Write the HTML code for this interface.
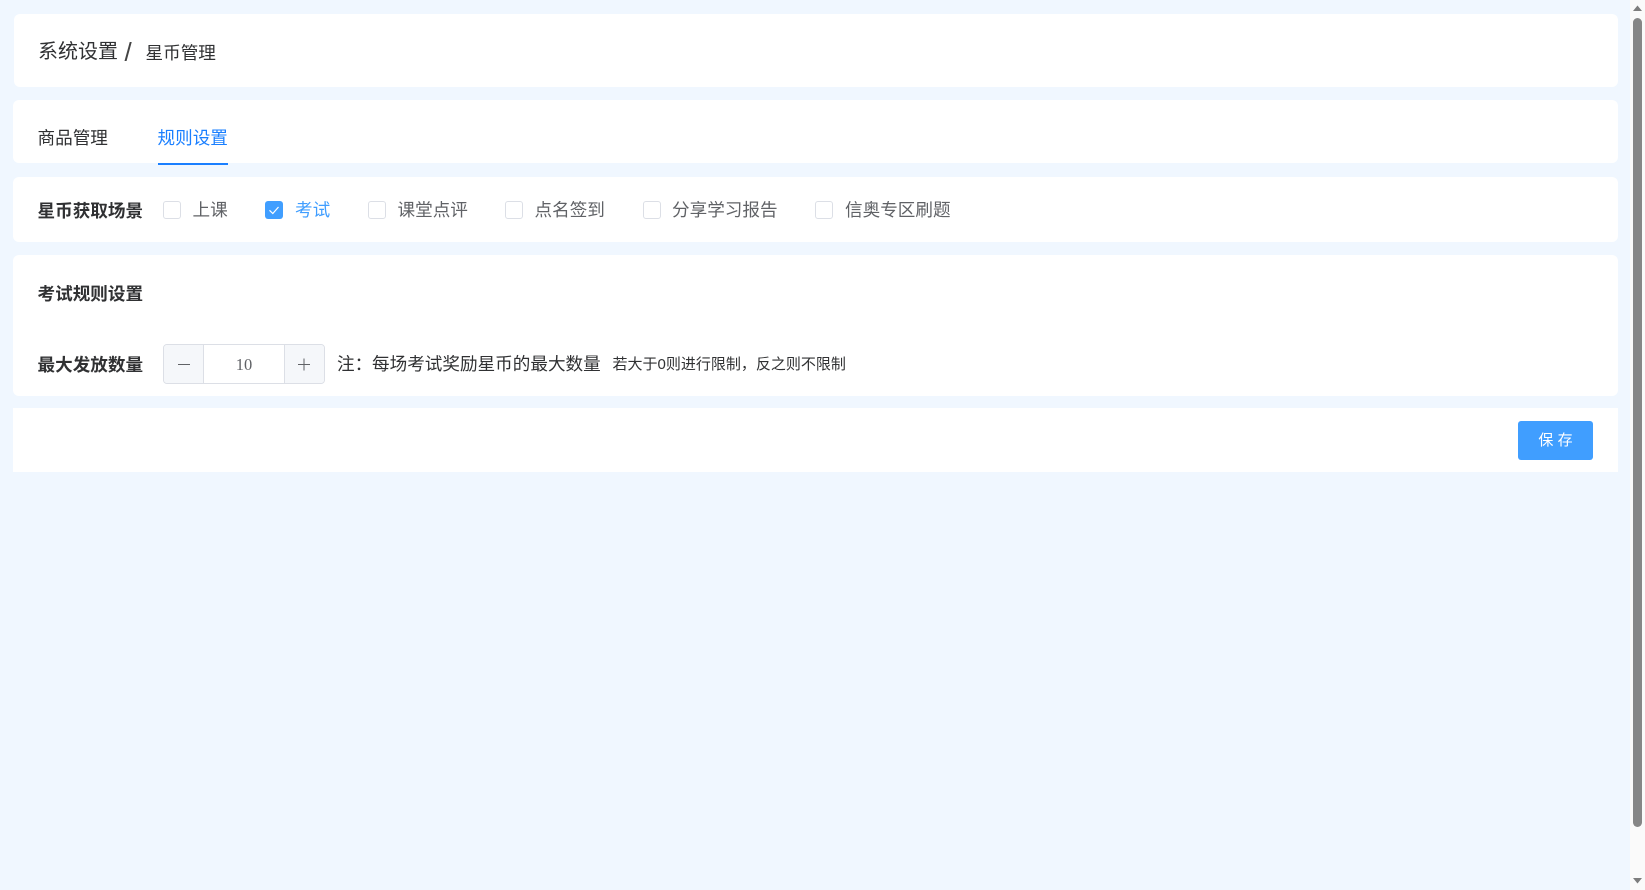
<!DOCTYPE html>
<html lang="zh-CN">
<head>
<meta charset="utf-8">
<title>星币管理</title>
<style>
html,body{margin:0;padding:0;width:1645px;height:890px;overflow:hidden;background:#f0f7ff;}
body{position:relative;font-family:"Liberation Sans","WenQuanYi Zen Hei","Noto Sans CJK SC",sans-serif;color:#303133;}
.card{position:absolute;background:#fff;border-radius:6px;left:13px;width:1605px;}
.t{position:absolute;white-space:nowrap;line-height:24px;font-size:17.6px;}
.b{font-weight:bold;}
.g{color:#606266;}
.cb{position:absolute;top:201px;width:16px;height:16px;border:1px solid #dcdfe6;border-radius:3px;background:#fff;}
</style>
</head>
<body>
<div class="card" style="top:14px;height:73px;left:14px;width:1604px;"></div>
<div class="t" style="left:38px;top:40px;font-size:20px;">系统设置</div>
<div class="t" style="left:124.500px;top:40px;font-size:26px;font-weight:300;color:#444;">/</div>
<div class="t" style="left:145.500px;top:41px;">星币管理</div>

<div class="card" style="top:100px;height:63px;"></div>
<div class="t" style="left:37.500px;top:126px;">商品管理</div>
<div class="t" style="left:157.500px;top:126px;color:#1a7fff;">规则设置</div>
<div style="position:absolute;left:158px;top:163px;width:70px;height:2px;background:#1a7fff;"></div>

<div class="card" style="top:177px;height:65px;"></div>
<div class="t b" style="left:37.500px;top:199px;">星币获取场景</div>
<div class="cb" style="left:163px;"></div>
<div class="t g" style="left:192.500px;top:198px;">上课</div>
<div class="cb" style="left:265px;width:18px;height:18px;border:0;background:#409eff;">
<svg width="18" height="18" viewBox="0 0 18 18" style="display:block"><path d="M4.500 9.300 L7.800 12.500 L13.500 6" fill="none" stroke="#fff" stroke-width="1.200"/></svg>
</div>
<div class="t" style="left:295px;top:198px;color:#409eff;">考试</div>
<div class="cb" style="left:368px;"></div>
<div class="t g" style="left:397.500px;top:198px;">课堂点评</div>
<div class="cb" style="left:505px;"></div>
<div class="t g" style="left:534.500px;top:198px;">点名签到</div>
<div class="cb" style="left:643px;"></div>
<div class="t g" style="left:672px;top:198px;">分享学习报告</div>
<div class="cb" style="left:815px;"></div>
<div class="t g" style="left:845px;top:198px;">信奥专区刷题</div>

<div class="card" style="top:255px;height:141px;"></div>
<div class="t b" style="left:37.500px;top:282px;">考试规则设置</div>
<div class="t b" style="left:37.500px;top:353px;">最大发放数量</div>

<div style="position:absolute;left:163px;top:344px;width:160px;height:38px;border:1px solid #dcdfe6;border-radius:4px;background:#fff;overflow:hidden;">
  <div style="position:absolute;left:0;top:0;width:39px;height:38px;background:#f5f7fa;border-right:1px solid #dcdfe6;"></div>
  <div style="position:absolute;right:0;top:0;width:39px;height:38px;background:#f5f7fa;border-left:1px solid #dcdfe6;"></div>
  <svg width="160" height="38" viewBox="0 0 160 38" style="position:absolute;left:0;top:0">
    <path d="M14 19.500 H26 M134 19.500 H146 M140 13.500 V25.500" stroke="#606266" stroke-width="1" fill="none"/>
  </svg>
  <div style="position:absolute;left:40px;width:80px;top:8px;text-align:center;font:16.500px/24px 'Liberation Serif',serif;color:#606266;">10</div>
</div>

<div class="t" style="left:337px;top:352px;color:#303133;">注&#xFF1A;</div>
<div class="t" style="left:372px;top:352px;">每场考试奖励星币的最大数量</div>
<div class="t" style="left:612.500px;top:353px;font-size:15px;">若大于0则进行限制&#xFF0C;反之则不限制</div>

<div class="card" style="top:408px;height:64px;border-radius:0;"></div>
<div style="position:absolute;left:1518px;top:421px;width:75px;height:39px;background:#409eff;border-radius:3px;color:#fff;font-size:15px;line-height:39px;text-align:center;">保&nbsp;存</div>

<div style="position:absolute;left:1630px;top:0;width:15px;height:890px;background:#fafafa;"></div>
<div style="position:absolute;left:1633px;top:18px;width:9px;height:809px;background:#868686;border-radius:5px;"></div>
<svg width="15" height="890" viewBox="0 0 15 890" style="position:absolute;left:1630px;top:0">
  <path d="M3 11 L7.500 5.500 L12 11 Z M3 878 L12 878 L7.500 883.500 Z" fill="#7d7d7d"/>
</svg>
</body>
</html>
